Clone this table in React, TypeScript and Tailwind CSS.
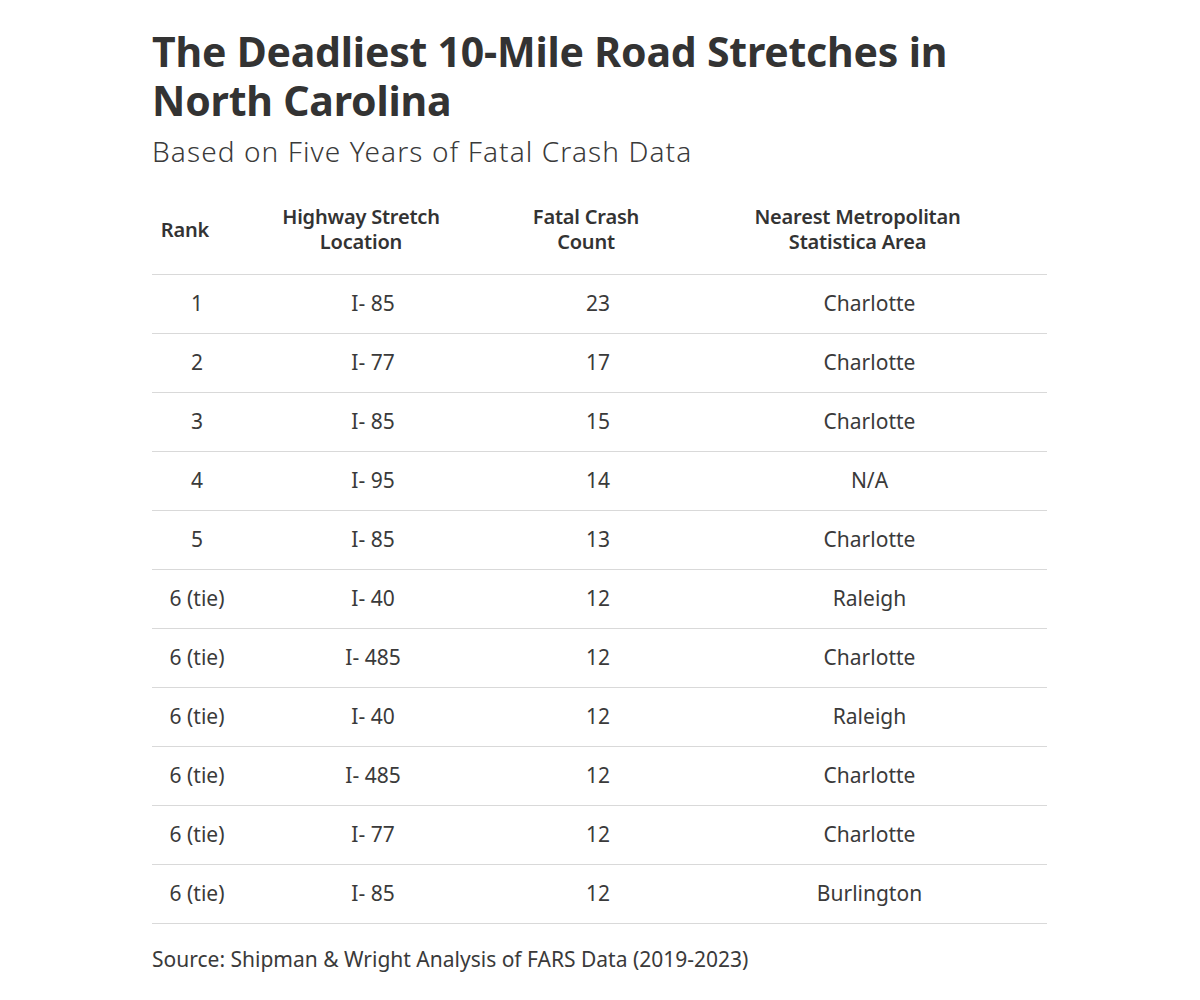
import React from 'react';

const rows: [string, string, string, string][] = [
  ['1', 'I- 85', '23', 'Charlotte'],
  ['2', 'I- 77', '17', 'Charlotte'],
  ['3', 'I- 85', '15', 'Charlotte'],
  ['4', 'I- 95', '14', 'N/A'],
  ['5', 'I- 85', '13', 'Charlotte'],
  ['6 (tie)', 'I- 40', '12', 'Raleigh'],
  ['6 (tie)', 'I- 485', '12', 'Charlotte'],
  ['6 (tie)', 'I- 40', '12', 'Raleigh'],
  ['6 (tie)', 'I- 485', '12', 'Charlotte'],
  ['6 (tie)', 'I- 77', '12', 'Charlotte'],
  ['6 (tie)', 'I- 85', '12', 'Burlington'],
];

const cols = 'grid grid-cols-[90px_262px_188px_355px]';

export default function App() {
  return (
    <div className="min-h-[1000px] w-[1200px] bg-white font-['Noto_Sans',sans-serif] text-[#333]">
      <div className="pl-[152px] pt-[27px]">
        <h1 className="w-[820px] text-[41px] font-bold leading-[49px] tracking-[-0.2px] text-[#333]">
          The Deadliest 10-Mile Road Stretches in North Carolina
        </h1>
        <p className="mt-[8px] text-[28px] font-light leading-[36px] tracking-[1.1px] text-[#3a3a3a]">
          Based on Five Years of Fatal Crash Data
        </p>

        <div className="mt-[25px] w-[895px]">
          <div className={`${cols} h-[81px] items-center border-b border-[#d9d9d9] pb-[10px] text-[20px] font-semibold leading-[25px] tracking-[-0.2px] text-[#333]`}>
            <div className="pr-6 text-center">Rank</div>
            <div className="pr-6 text-center">Highway Stretch<br />Location</div>
            <div className="pr-6 text-center">Fatal Crash<br />Count</div>
            <div className="pr-6 text-center">Nearest Metropolitan<br />Statistica Area</div>
          </div>
          {rows.map((r, i) => (
            <div
              key={i}
              className={`${cols} h-[59px] items-center border-b border-[#d9d9d9] text-[21px] text-[#3a3a3a]`}
            >
              {r.map((c, j) => (
                <div key={j} className="text-center">{c}</div>
              ))}
            </div>
          ))}
        </div>

        <p className="mt-[20px] text-[21px] leading-[30px] text-[#3a3a3a]">
          Source: Shipman &amp; Wright Analysis of FARS Data (2019-2023)
        </p>
      </div>
    </div>
  );
}
